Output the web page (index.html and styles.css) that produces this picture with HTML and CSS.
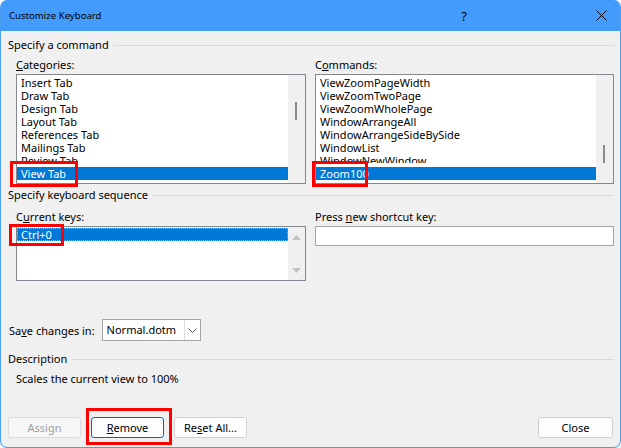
FILE: index.html
```html
<!DOCTYPE html>
<html lang="en">
<head>
    <meta charset="UTF-8">
    <title>Customize Keyboard</title>
    <link rel="stylesheet" href="styles.css">
</head>
<body>
    <div class="window">
        <div class="titlebar">
            <span class="title">Customize Keyboard</span>
            <span class="help">?</span>
            <span class="close">
                <svg width="11" height="11" viewBox="0 0 11 11"><path d="M0.5 0.5L10.5 10.5M10.5 0.5L0.5 10.5" stroke="#000" stroke-width="1"/></svg>
            </span>
        </div>

        <div class="body">
            <div class="group-head"><span>Specify a command</span></div>
            <div class="columns">
                <div class="field">
                    <label><u>C</u>ategories:</label>
                    <div class="listbox tall">
                        <ul class="items">
                            <li>Insert Tab</li>
                            <li>Draw Tab</li>
                            <li>Design Tab</li>
                            <li>Layout Tab</li>
                            <li>References Tab</li>
                            <li>Mailings Tab</li>
                            <li class="clipped">Review Tab</li>
                            <li class="selected">View Tab</li>
                        </ul>
                        <div class="scroll"><div class="thumb thumb-mid"></div></div>
                    </div>
                </div>
                <div class="field">
                    <label>C<u>o</u>mmands:</label>
                    <div class="listbox tall">
                        <ul class="items">
                            <li>ViewZoomPageWidth</li>
                            <li>ViewZoomTwoPage</li>
                            <li>ViewZoomWholePage</li>
                            <li>WindowArrangeAll</li>
                            <li>WindowArrangeSideBySide</li>
                            <li>WindowList</li>
                            <li class="clipped">WindowNewWindow</li>
                            <li class="selected">Zoom100</li>
                        </ul>
                        <div class="scroll"><div class="thumb thumb-low"></div></div>
                    </div>
                </div>
            </div>

            <div class="group-head second"><span>Specify keyboard sequence</span></div>
            <div class="columns keys">
                <div class="field">
                    <label>C<u>u</u>rrent keys:</label>
                    <div class="listbox short">
                        <ul class="items">
                            <li class="selected focused">Ctrl+0</li>
                        </ul>
                        <div class="scroll arrows">
                            <svg width="9" height="5" viewBox="0 0 9 5"><path d="M0 5L4.5 0L9 5Z" fill="#c2c2c2"/></svg>
                            <svg width="9" height="5" viewBox="0 0 9 5"><path d="M0 0L4.5 5L9 0Z" fill="#c2c2c2"/></svg>
                        </div>
                    </div>
                </div>
                <div class="field">
                    <label>Press <u>n</u>ew shortcut key:</label>
                    <div class="textbox"></div>
                </div>
            </div>

            <div class="save-row">
                <span>Sa<u>v</u>e changes in:</span>
                <div class="select">
                    <span class="select-value">Normal.dotm</span>
                    <span class="select-btn">
                        <svg width="9" height="5" viewBox="0 0 9 5"><path d="M0.5 0.5L4.5 4.5L8.5 0.5" fill="none" stroke="#555" stroke-width="1"/></svg>
                    </span>
                </div>
            </div>

            <div class="group-head third"><span>Description</span></div>
            <p class="description">Scales the current view to 100%</p>

            <div class="buttons">
                <button class="btn" disabled>Assign</button>
                <button class="btn default"><u>R</u>emove</button>
                <button class="btn">Re<u>s</u>et All...</button>
                <button class="btn close-btn">Close</button>
            </div>
        </div>

        <!-- annotation boxes -->
        <div class="mark mark-category"></div>
        <div class="mark mark-command"></div>
        <div class="mark mark-keys"></div>
        <div class="mark mark-remove"></div>
    </div>
</body>
</html>
```

FILE: styles.css
```css
* {
    margin: 0;
    padding: 0;
    box-sizing: border-box;
}

body {
    background-color: #fff;
    font-family: 'Noto Sans', Arial, sans-serif;
    font-size: 11px;
    color: #000;
}

u {
    text-decoration: underline;
    text-underline-offset: 1px;
}

.window {
    position: relative;
    width: 621px;
    height: 448px;
    background-color: #f0f0f0;
    border: 1px solid #4a9ff5;
    border-top: none;
    border-radius: 7px;
    overflow: hidden;
}

.titlebar {
    display: flex;
    align-items: center;
    height: 31px;
    padding-left: 8px;
    background-color: #439cfc;
}

.title {
    font-size: 9.6px;
    flex: 1;
}

.help {
    font-size: 13px;
    margin-right: 129px;
}

.close {
    display: flex;
    margin-right: 13px;
}

.body {
    padding: 7px 6px 0 7px;
}

.group-head {
    display: flex;
    align-items: center;
    gap: 5px;
    height: 14px;
    line-height: 14px;
}

.group-head::after {
    content: '';
    flex: 1;
    border-top: 1px solid #dadada;
}

.group-head.second {
    margin-top: 4px;
}

.group-head.third {
    margin-top: 11px;
}

.columns {
    display: grid;
    grid-template-columns: 290px 299px;
    column-gap: 9px;
    margin: 6px 0 0 8px;
}

.columns.keys {
    margin-top: 8px;
}

.field label {
    display: block;
    height: 14px;
    line-height: 14px;
    margin-bottom: 2px;
}

.listbox {
    display: flex;
    border: 1px solid #828790;
    background-color: #fff;
}

.listbox.tall {
    height: 110px;
}

.listbox.short {
    height: 55px;
}

.items {
    flex: 1;
    list-style: none;
    padding-top: 1px;
    overflow: hidden;
}

.items li {
    height: 13px;
    line-height: 13px;
    padding-left: 4px;
    white-space: nowrap;
}

.items li.clipped {
    height: 9px;
    margin-bottom: 4px;
    overflow: hidden;
}

.items li.selected {
    background-color: #0078d7;
    color: #fff;
}

.items li.focused {
    outline: 1px dotted #f0a43a;
    outline-offset: -1px;
}

.scroll {
    width: 17px;
    background-color: #f0f0f0;
    position: relative;
}

.thumb {
    position: absolute;
    left: 7px;
    width: 2px;
    height: 18px;
    background-color: #8a8a8a;
}

.thumb-mid {
    top: 27px;
}

.thumb-low {
    top: 70px;
}

.scroll.arrows {
    display: flex;
    flex-direction: column;
    align-items: center;
    justify-content: space-between;
    padding: 8px 0 7px;
}

.textbox {
    height: 20px;
    border: 1px solid #a5a5a5;
    background-color: #fff;
}

.save-row {
    display: flex;
    align-items: center;
    gap: 7px;
    margin-top: 38px;
    height: 22px;
    padding-left: 1px;
}

.select {
    display: flex;
    width: 99px;
    height: 22px;
    border: 1px solid #a5a5a5;
    background-color: #fff;
}

.select-value {
    flex: 1;
    line-height: 20px;
    padding-left: 4px;
}

.select-btn {
    display: flex;
    align-items: center;
    justify-content: center;
    width: 16px;
    border-left: 1px solid #dcdcdc;
}

.description {
    margin: 6px 0 0 8px;
    height: 14px;
    line-height: 14px;
}

.buttons {
    display: flex;
    gap: 10px;
    margin-top: 31px;
}

.btn {
    width: 73px;
    height: 21px;
    font-family: inherit;
    font-size: 11px;
    color: #000;
    background-color: #fdfdfd;
    border: 1px solid #d0d0d0;
    border-radius: 3px;
}

.btn:disabled {
    color: #a0a0a0;
    background-color: #f7f7f7;
    border-color: #dcdcdc;
}

.btn.default {
    border-color: #0067c0;
}

.close-btn {
    margin-left: auto;
    margin-right: 1px;
    width: 75px;
}

.mark {
    position: absolute;
    border: 3px solid #f00;
}

.mark-category {
    left: 9px;
    top: 161px;
    width: 68px;
    height: 26px;
}

.mark-command {
    left: 311px;
    top: 161px;
    width: 56px;
    height: 26px;
}

.mark-keys {
    left: 8px;
    top: 224px;
    width: 55px;
    height: 22px;
}

.mark-remove {
    left: 85px;
    top: 408px;
    width: 86px;
    height: 37px;
}
```
